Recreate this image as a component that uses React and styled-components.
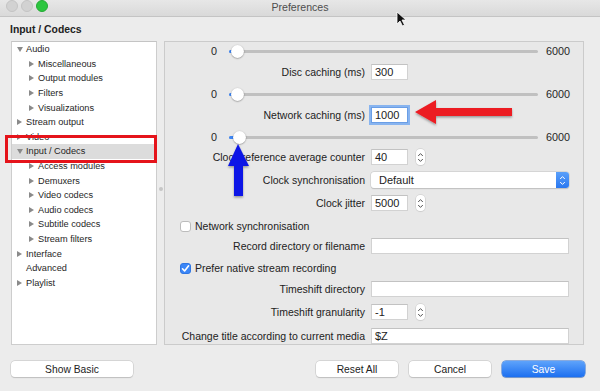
import React from 'react';
import styled, { createGlobalStyle, css } from 'styled-components';

const Global = createGlobalStyle`
  html, body { margin: 0; padding: 0; width: 600px; height: 391px; overflow: hidden; background: #ececec; }
  * { box-sizing: border-box; }
`;

const Window = styled.div`
  position: relative;
  width: 600px;
  height: 391px;
  background: #ececec;
  font-family: "Liberation Sans", Arial, sans-serif;
  font-size: 10.5px;
  color: #262626;
  display: flex;
  flex-direction: column;
  overflow: hidden;
`;

const TitleBar = styled.div`
  flex: none;
  height: 17px;
  display: grid;
  grid-template-columns: 1fr auto 1fr;
  align-items: start;
  background: linear-gradient(#e7e7e7, #d9d9d9);
  border-bottom: 1px solid #c4c4c4;
`;

const Lights = styled.div`
  display: flex;
  gap: 3px;
  padding-left: 6px;
`;

const Light = styled.span`
  width: 12px;
  height: 12px;
  border-radius: 50%;
  background: ${p => (p.$green ? '#2cc63f' : '#d2d2d2')};
  border: 1px solid ${p => (p.$green ? '#24aa34' : '#c4c4c4')};
`;

const Title = styled.div`
  font-size: 10.6px;
  color: #4d4d4d;
  line-height: 15px;
`;

const Header = styled.div`
  flex: none;
  height: 24px;
  display: flex;
  align-items: center;
  padding-left: 10px;
  font-weight: bold;
  font-size: 10.4px;
  color: #222;
`;

const Main = styled.div`
  flex: none;
  height: 304px;
  display: flex;
  padding: 0 16px 0 11px;
`;

const List = styled.div`
  width: 146px;
  background: #fff;
  border: 1px solid #cdcdcd;
  border-top-color: #c4c4c4;
  font-size: 9.2px;
`;

const Item = styled.div`
  height: 14.6px;
  display: flex;
  align-items: center;
  padding-left: ${p => 5 + p.$level * 12}px;
  background: ${p => (p.$selected ? '#dcdcdc' : 'transparent')};
  color: #262626;
  white-space: nowrap;
`;

const Twisty = styled.span`
  flex: none;
  width: 9px;
  height: 7px;
  position: relative;
  &::before {
    content: '';
    position: absolute;
    left: 0;
    top: 1px;
    ${p =>
      p.$kind === 'open'
        ? css`
            border-left: 3.5px solid transparent;
            border-right: 3.5px solid transparent;
            border-top: 5.5px solid #8a8a8a;
          `
        : p.$kind === 'closed'
        ? css`
            border-top: 3.2px solid transparent;
            border-bottom: 3.2px solid transparent;
            border-left: 5.5px solid #8a8a8a;
            top: 0.5px;
          `
        : css`display: none;`}
  }
`;

const Splitter = styled.div`
  width: 7px;
  display: flex;
  align-items: center;
  justify-content: center;
  padding-bottom: 8px;
  &::after {
    content: '';
    width: 4px;
    height: 4px;
    border-radius: 50%;
    background: #c6c6c6;
  }
`;

const Panel = styled.div`
  width: 420px;
  border: 1px solid #cbcbcb;
  background: #e8e8e8;
  display: flex;
  flex-direction: column;
`;

const Row = styled.div`
  flex: none;
  height: 18px;
  margin-top: ${p => p.$mt}px;
  display: grid;
  grid-template-columns: 200px auto 1fr;
  column-gap: 6px;
  align-items: center;
`;

const Label = styled.div`
  text-align: right;
  white-space: nowrap;
  color: #222;
`;

const SliderRow = styled.div`
  flex: none;
  height: 18px;
  margin-top: ${p => p.$mt}px;
  display: flex;
  align-items: center;
  padding-left: 46px;
  font-size: 10.8px;
`;

const Track = styled.div`
  position: relative;
  width: 309px;
  height: 3px;
  margin-left: 12px;
  margin-right: 8px;
  border-radius: 2px;
  background: #c0c0c0;
`;

const Fill = styled.div`
  height: 3px;
  border-radius: 2px;
  background: #3d86f5;
`;

const Thumb = styled.div`
  position: absolute;
  top: -5px;
  width: 13px;
  height: 13px;
  border-radius: 50%;
  background: #fff;
  box-shadow: 0 0.5px 1.5px rgba(0, 0, 0, 0.45);
`;

const Input = styled.div`
  height: 16px;
  width: ${p => (p.$wide ? '198px' : '37px')};
  background: #fff;
  border: 1px solid #d2d2d2;
  border-top-color: #c2c2c2;
  padding-left: 3px;
  line-height: 14px;
  font-size: 11px;
  color: #222;
  white-space: nowrap;
  ${p => p.$focus && css`box-shadow: 0 0 0 2px #88b4ef; border-color: #6a9ee6;`}
`;

const Controls = styled.div`
  display: flex;
  align-items: center;
  gap: 8px;
`;

const Stepper = styled.div`
  width: 9px;
  height: 16px;
  border-radius: 4px;
  background: #fff;
  box-shadow: 0 0 0 0.5px #c8c8c8, 0 0.5px 1px rgba(0, 0, 0, 0.15);
  display: flex;
  align-items: center;
  justify-content: center;
`;

const Select = styled.div`
  width: 198px;
  height: 16px;
  display: flex;
  align-items: stretch;
  background: #fff;
  border-radius: 3px;
  box-shadow: 0 0 0 0.5px #c8c8c8, 0 0.5px 1px rgba(0, 0, 0, 0.2);
`;

const SelectText = styled.div`
  flex: 1;
  padding-left: 8px;
  line-height: 16px;
  font-size: 11px;
  color: #222;
`;

const SelectArrow = styled.div`
  width: 13px;
  border-radius: 0 3px 3px 0;
  background: linear-gradient(#5aa0fa, #2a78f0);
  display: flex;
  align-items: center;
  justify-content: center;
`;

const CheckRow = styled.div`
  flex: none;
  height: 18px;
  margin-top: ${p => p.$mt}px;
  display: flex;
  align-items: center;
  gap: 4px;
  padding-left: 15px;
  color: #222;
`;

const Box = styled.span`
  width: 11px;
  height: 11px;
  border-radius: 3px;
  display: flex;
  align-items: center;
  justify-content: center;
  ${p =>
    p.$checked
      ? css`background: #3b86f7; border: 1px solid #2f76e3;`
      : css`background: #fff; border: 1px solid #bcbcbc;`}
`;

const Footer = styled.div`
  flex: 1;
  display: flex;
  align-items: flex-start;
  justify-content: space-between;
  padding: 16px 15px 0 11px;
`;

const ButtonGroup = styled.div`
  display: flex;
  gap: 11px;
`;

const Button = styled.div`
  width: ${p => p.$w}px;
  height: 16px;
  border-radius: 4px;
  display: flex;
  align-items: center;
  justify-content: center;
  font-size: 10.3px;
  ${p =>
    p.$primary
      ? css`
          background: linear-gradient(#5ea3fb, #1c6ff0);
          color: #fff;
          box-shadow: 0 0 0 0.5px #2a6fd6, 0 0.5px 1px rgba(0, 0, 0, 0.2);
        `
      : css`
          background: #fff;
          color: #222;
          box-shadow: 0 0 0 0.5px #c4c4c4, 0 0.5px 1px rgba(0, 0, 0, 0.2);
        `}
`;

const Highlight = styled.div`
  position: absolute;
  left: 5px;
  top: 135px;
  width: 152px;
  height: 28px;
  border: 3px solid #e5141b;
  pointer-events: none;
`;

const Overlay = styled.svg`
  position: absolute;
  left: 0;
  top: 0;
  pointer-events: none;
`;

const Chevrons = ({ color = '#555' }) => (
  <svg width="7" height="11" viewBox="0 0 7 11">
    <path d="M1.2 4 L3.5 1.6 L5.8 4" fill="none" stroke={color} strokeWidth="1" />
    <path d="M1.2 7 L3.5 9.4 L5.8 7" fill="none" stroke={color} strokeWidth="1" />
  </svg>
);

const Check = () => (
  <svg width="9" height="9" viewBox="0 0 9 9">
    <path d="M1.5 4.8 L3.6 7 L7.6 1.8" fill="none" stroke="#fff" strokeWidth="1.6" strokeLinecap="round" strokeLinejoin="round" />
  </svg>
);

const tree = [
  { t: 'Audio', l: 0, k: 'open' },
  { t: 'Miscellaneous', l: 1, k: 'closed' },
  { t: 'Output modules', l: 1, k: 'closed' },
  { t: 'Filters', l: 1, k: 'closed' },
  { t: 'Visualizations', l: 1, k: 'closed' },
  { t: 'Stream output', l: 0, k: 'closed' },
  { t: 'Video', l: 0, k: 'closed' },
  { t: 'Input / Codecs', l: 0, k: 'open', sel: true },
  { t: 'Access modules', l: 1, k: 'closed' },
  { t: 'Demuxers', l: 1, k: 'closed' },
  { t: 'Video codecs', l: 1, k: 'closed' },
  { t: 'Audio codecs', l: 1, k: 'closed' },
  { t: 'Subtitle codecs', l: 1, k: 'closed' },
  { t: 'Stream filters', l: 1, k: 'closed' },
  { t: 'Interface', l: 0, k: 'closed' },
  { t: 'Advanced', l: 0, k: 'none' },
  { t: 'Playlist', l: 0, k: 'closed' },
];

const Slider = ({ mt, pos }) => (
  <SliderRow $mt={mt}>
    <span>0</span>
    <Track>
      <Fill style={{ width: pos + 3 }} />
      <Thumb style={{ left: pos }} />
    </Track>
    <span>6000</span>
  </SliderRow>
);

const Field = ({ mt, label, children }) => (
  <Row $mt={mt}>
    <Label>{label}</Label>
    {children}
  </Row>
);

export default function App() {
  return (
    <Window>
      <Global />
      <TitleBar>
        <Lights>
          <Light />
          <Light />
          <Light $green />
        </Lights>
        <Title>Preferences</Title>
        <div />
      </TitleBar>
      <Header>Input / Codecs</Header>
      <Main>
        <List>
          {tree.map(it => (
            <Item key={it.t} $level={it.l} $selected={it.sel}>
              <Twisty $kind={it.k} />
              {it.t}
            </Item>
          ))}
        </List>
        <Splitter />
        <Panel>
          <Slider mt={0} pos={2} />
          <Field mt={3} label="Disc caching (ms)">
            <Input>300</Input>
          </Field>
          <Slider mt={4} pos={2} />
          <Field mt={3} label="Network caching (ms)">
            <Input $focus>1000</Input>
          </Field>
          <Slider mt={4} pos={4} />
          <Field mt={2} label="Clock reference average counter">
            <Controls>
              <Input>40</Input>
              <Stepper><Chevrons /></Stepper>
            </Controls>
          </Field>
          <Field mt={5} label="Clock synchronisation">
            <Select>
              <SelectText>Default</SelectText>
              <SelectArrow><Chevrons color="#fff" /></SelectArrow>
            </Select>
          </Field>
          <Field mt={5} label="Clock jitter">
            <Controls>
              <Input>5000</Input>
              <Stepper><Chevrons /></Stepper>
            </Controls>
          </Field>
          <CheckRow $mt={5}>
            <Box />
            Network synchronisation
          </CheckRow>
          <Field mt={2} label="Record directory or filename">
            <Input $wide />
          </Field>
          <CheckRow $mt={4}>
            <Box $checked><Check /></Box>
            Prefer native stream recording
          </CheckRow>
          <Field mt={3} label="Timeshift directory">
            <Input $wide />
          </Field>
          <Field mt={5} label="Timeshift granularity">
            <Controls>
              <Input>-1</Input>
              <Stepper><Chevrons /></Stepper>
            </Controls>
          </Field>
          <Field mt={6} label="Change title according to current media">
            <Input $wide>$Z</Input>
          </Field>
        </Panel>
      </Main>
      <Footer>
        <Button $w={122}>Show Basic</Button>
        <ButtonGroup>
          <Button $w={82}>Reset All</Button>
          <Button $w={82}>Cancel</Button>
          <Button $w={83} $primary>Save</Button>
        </ButtonGroup>
      </Footer>

      <Highlight />
      <Overlay width="600" height="391" viewBox="0 0 600 391">
        <defs>
          <filter id="sh" x="-20%" y="-40%" width="140%" height="180%">
            <feDropShadow dx="0" dy="1.5" stdDeviation="1.2" floodColor="#000" floodOpacity="0.35" />
          </filter>
        </defs>
        <polygon
          points="415,112 436,100 436,108 512,108 512,116 436,116 436,124"
          fill="#ec1c24"
          filter="url(#sh)"
        />
        <polygon
          points="238,144 249,166 243,166 243,196 234,196 234,166 228,166"
          fill="#0b17e6"
          filter="url(#sh)"
        />
        <path
          d="M397 12 L397 24 L400 21 L402.5 26 L404.5 25 L402 20 L406 20 Z"
          fill="#111"
          stroke="#fff"
          strokeWidth="0.8"
        />
      </Overlay>
    </Window>
  );
}
